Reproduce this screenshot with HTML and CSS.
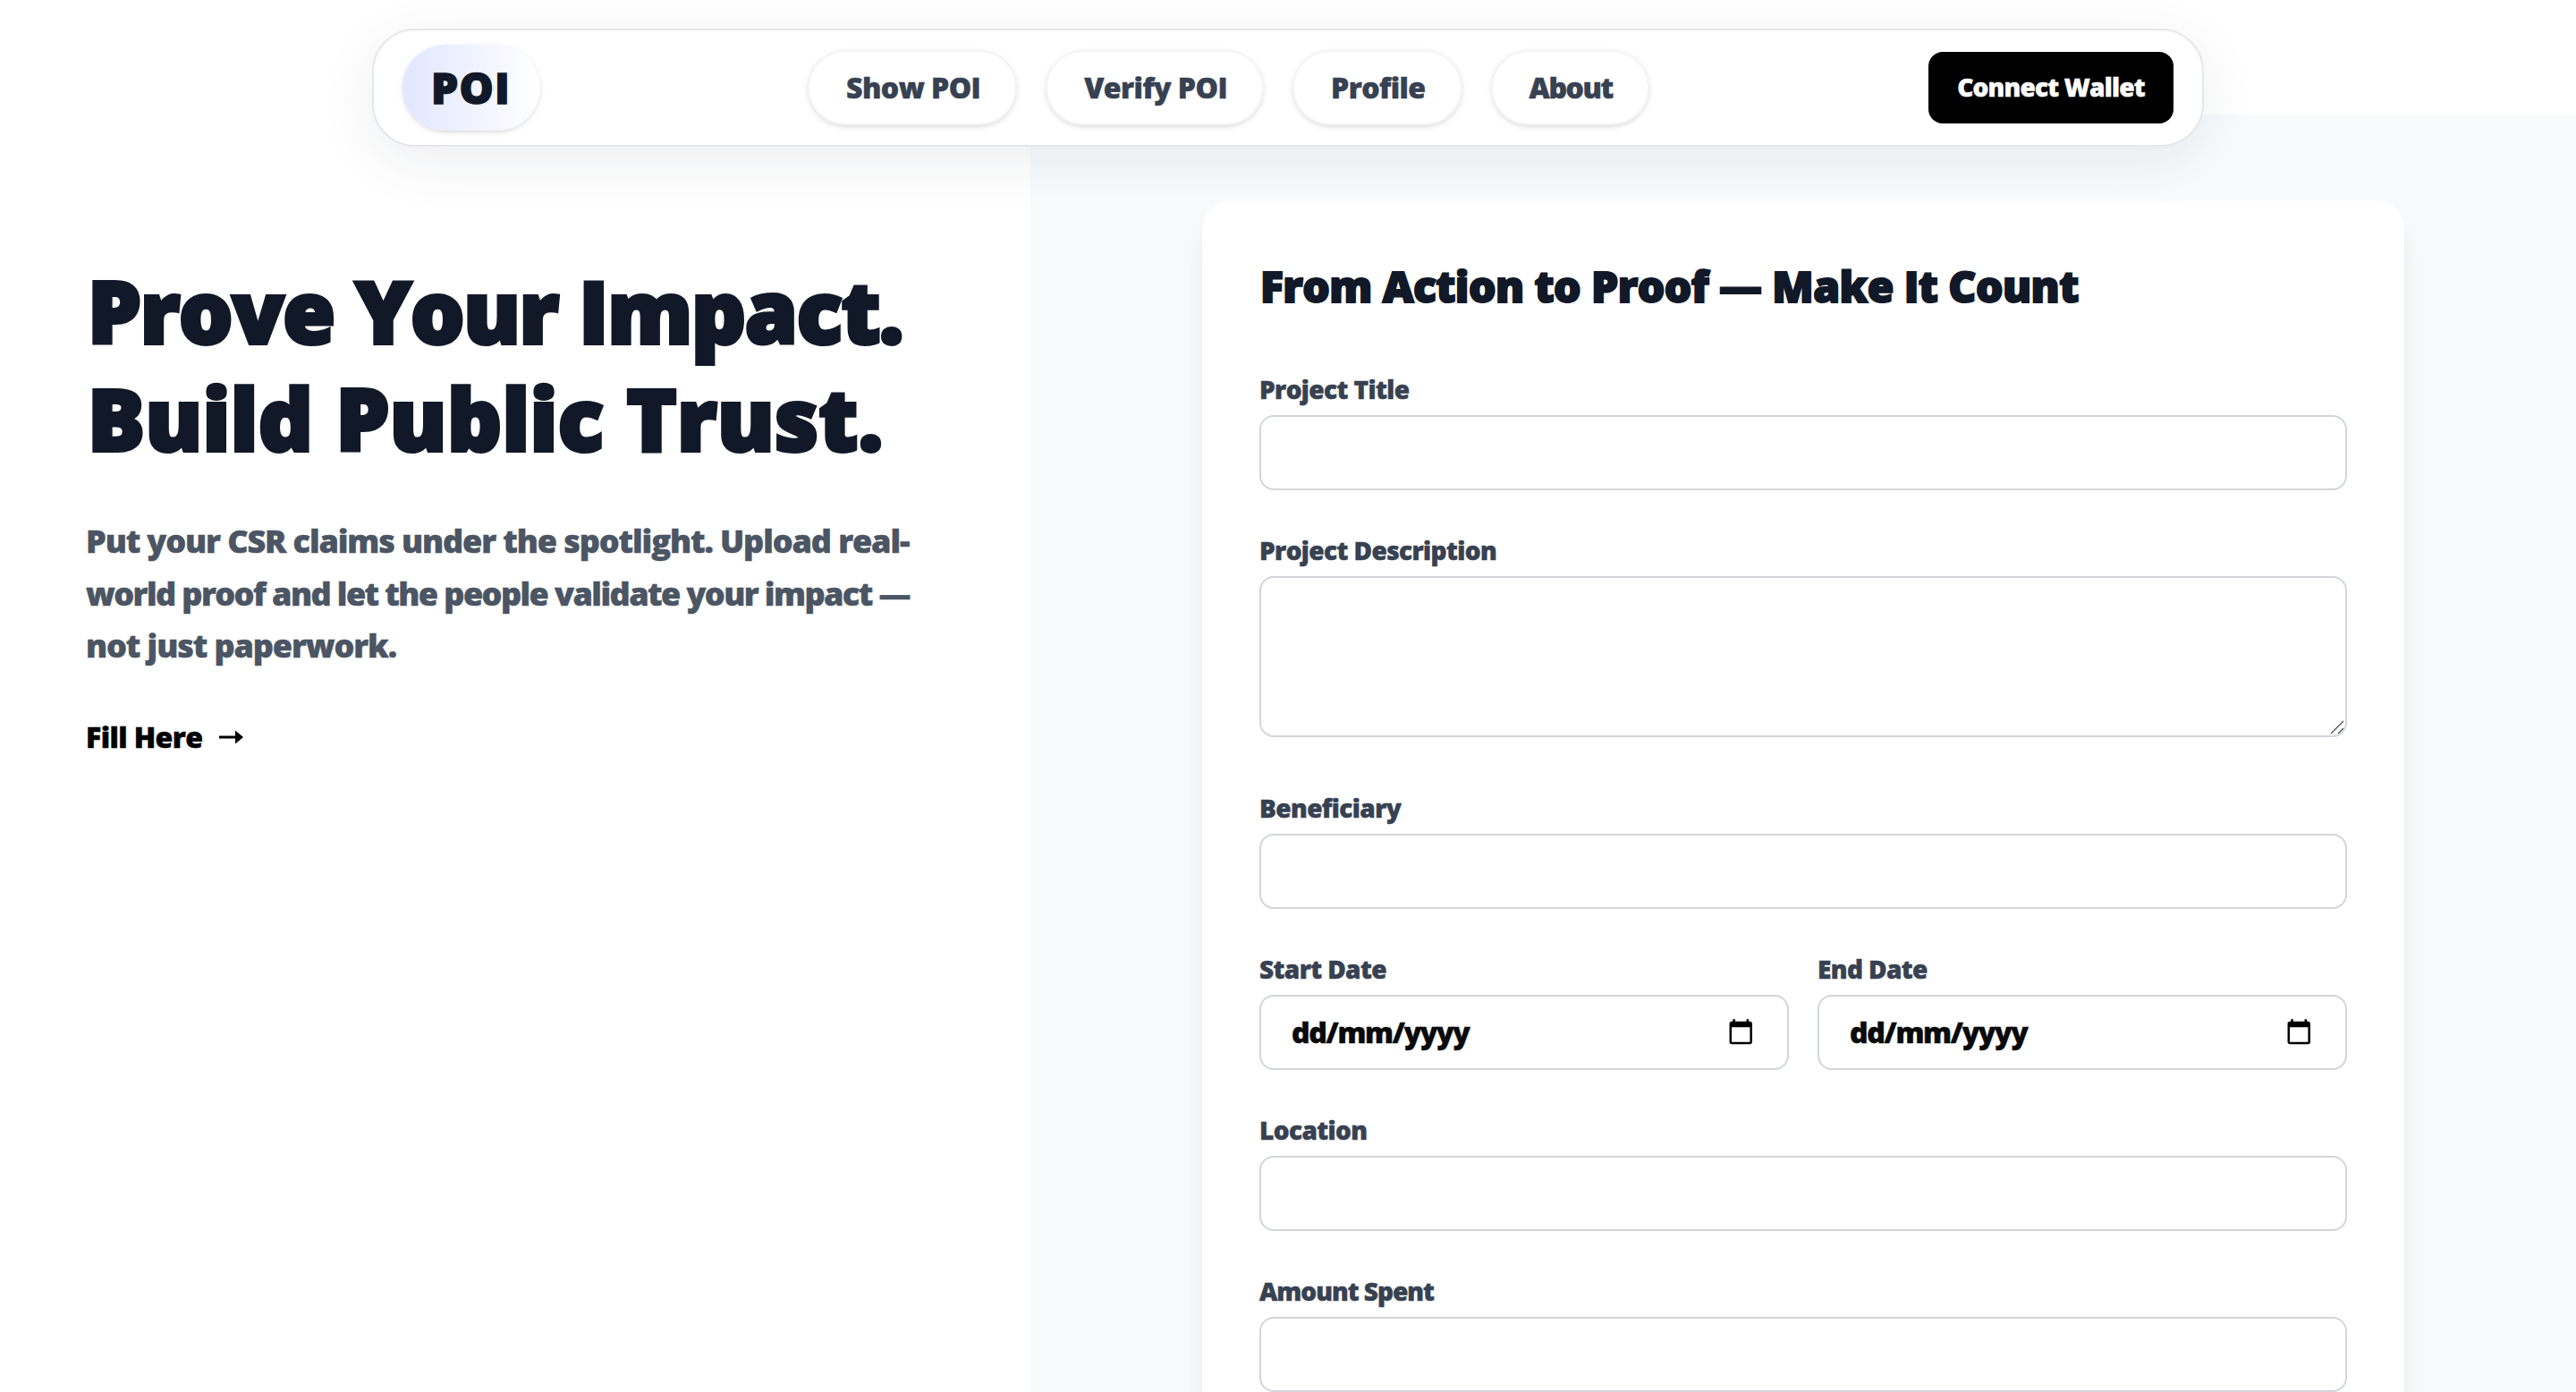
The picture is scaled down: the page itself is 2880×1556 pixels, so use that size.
FILE: index.html
```
<!DOCTYPE html>
<html lang="en">
<head>
    <meta charset="UTF-8">
    <meta name="viewport" content="width=device-width, initial-scale=1.0">
    <title>POI</title>
    <link rel="stylesheet" href="styles.css">
</head>
<body>
    <header class="navbar">
        <a class="logo">POI</a>
        <nav class="nav-links">
            <a class="nav-link">Show POI</a>
            <a class="nav-link">Verify POI</a>
            <a class="nav-link">Profile</a>
            <a class="nav-link nav-link-tight">About</a>
        </nav>
        <button class="connect-btn">Connect Wallet</button>
    </header>

    <main class="page">
        <section class="intro">
            <h1 class="intro-title">
                <span class="title-top">Prove Your Impact.</span><br>
                <span>Build Public Trust.</span>
            </h1>
            <p class="intro-text">
                Put your CSR claims under the spotlight. Upload real-<br>
                <span class="text-tight">world proof and let the people validate your impact —</span><br>
                not just paperwork.
            </p>
            <a class="fill-link">
                Fill Here
                <svg class="arrow" viewBox="0 0 27 16">
                    <path d="M0 6.6H18V0.5L27 8L18 15.5V9.4H0Z"/>
                </svg>
            </a>
        </section>

        <section class="form-panel">
            <form class="card">
                <h2 class="card-title">From Action to Proof — Make It Count</h2>
                <div class="field">
                    <label for="title">Project Title</label>
                    <input class="control" id="title" type="text">
                </div>
                <div class="field">
                    <label for="description">Project Description</label>
                    <div class="textarea-wrap">
                        <textarea class="control control-area" id="description"></textarea>
                        <!-- resize handle -->
                        <svg class="resizer" viewBox="0 0 16 16">
                            <path d="M1 15L15 1M9 15L15 9"/>
                        </svg>
                    </div>
                </div>
                <div class="field">
                    <label for="beneficiary">Beneficiary</label>
                    <input class="control" id="beneficiary" type="text">
                </div>
                <div class="field-row">
                    <div class="field">
                        <label>Start Date</label>
                        <div class="control control-date">
                            <span>dd/mm/yyyy</span>
                            <svg class="calendar" viewBox="0 0 24 24">
                                <path d="M20 3h-1V1h-2v2H7V1H5v2H4c-1.1 0-2 .9-2 2v16c0 1.1.9 2 2 2h16c1.1 0 2-.9 2-2V5c0-1.1-.9-2-2-2zm0 18H4V8h16v13z"/>
                            </svg>
                        </div>
                    </div>
                    <div class="field">
                        <label>End Date</label>
                        <div class="control control-date">
                            <span>dd/mm/yyyy</span>
                            <svg class="calendar" viewBox="0 0 24 24">
                                <path d="M20 3h-1V1h-2v2H7V1H5v2H4c-1.1 0-2 .9-2 2v16c0 1.1.9 2 2 2h16c1.1 0 2-.9 2-2V5c0-1.1-.9-2-2-2zm0 18H4V8h16v13z"/>
                            </svg>
                        </div>
                    </div>
                </div>
                <div class="field">
                    <label for="location">Location</label>
                    <input class="control" id="location" type="text">
                </div>
                <div class="field">
                    <label class="label-tight" for="amount">Amount Spent</label>
                    <input class="control" id="amount" type="text">
                </div>
            </form>
        </section>
    </main>
</body>
</html>
```
FILE: styles.css
```
* {
    box-sizing: border-box;
}
body {
    margin: 0;
    height: 1556px;
    overflow: hidden;
    background-color: #fff;
    font-family: "Open Sans", "Noto Sans", sans-serif;
    font-weight: 800;
    color: #0a0a0a;
    -webkit-text-stroke: 0.5px currentColor;
}

/* Navbar */
.navbar {
    position: relative;
    z-index: 10;
    display: flex;
    align-items: center;
    width: 2048px;
    height: 132px;
    margin: 32px auto 0;
    padding: 0 32px;
    background-color: #fff;
    border: 2px solid #e5e7eb;
    border-radius: 48px;
    box-shadow: 0 16px 64px rgba(31, 38, 70, 0.08);
}
.logo {
    width: 154px;
    padding: 16px 0 16px 32px;
    border-radius: 48px;
    background: linear-gradient(to right, #e0e7ff, #fff);
    box-shadow: 0 2px 6px rgba(0, 0, 0, 0.1), 0 2px 4px -2px rgba(0, 0, 0, 0.1);
    font-size: 48px;
    line-height: 64px;
    letter-spacing: 1.2px;
    color: #111827;
    -webkit-text-stroke: 1.5px #111827;
}
.nav-links {
    display: flex;
    gap: 32px;
    margin-left: 299px;
}
.nav-link {
    padding: 16px 39px 16px 41px;
    border: 2px solid #f3f4f6;
    border-radius: 42px;
    box-shadow: 0 2px 6px rgba(0, 0, 0, 0.1), 0 2px 4px -2px rgba(0, 0, 0, 0.1);
    font-size: 32px;
    line-height: 48px;
    letter-spacing: -0.55px;
    color: #374151;
}
.nav-link-tight {
    letter-spacing: -1.4px;
}
.connect-btn {
    width: 274px;
    height: 80px;
    margin-left: auto;
    padding: 0 0 2px;
    border: none;
    border-radius: 16px;
    background-color: #000;
    font-family: inherit;
    font-size: 28px;
    font-weight: 800;
    letter-spacing: -0.8px;
    color: #fff;
}

/* Two column layout, slides under the navbar */
.page {
    display: flex;
    height: 1428px;
    margin-top: -36px;
}
.intro {
    width: 40%;
    padding: 159px 96px 0;
}
.form-panel {
    width: 60%;
    padding-top: 96px;
    background-color: #f8fafc;
}

/* Intro */
.intro-title {
    margin: 0 0 49px;
    padding-left: 2px;
    font-size: 95px;
    font-weight: 800;
    line-height: 120px;
    letter-spacing: 0.4px;
    white-space: nowrap;
    color: #111827;
    -webkit-text-stroke: 4px #111827;
}
.title-top {
    letter-spacing: -1.25px;
}
.intro-text {
    margin: 0 0 48.5px;
    font-size: 36px;
    line-height: 58.5px;
    letter-spacing: -1.1px;
    white-space: nowrap;
    color: #4b5563;
}
.text-tight {
    letter-spacing: -1.57px;
}
.fill-link {
    display: flex;
    align-items: center;
    gap: 19px;
    font-size: 32px;
    line-height: 48px;
    letter-spacing: -0.6px;
    color: #000;
}
.arrow {
    width: 27px;
    height: 16px;
}

/* Form card */
.card {
    width: 1344px;
    height: 1500px;
    margin: 0 auto;
    padding: 64px;
    border-radius: 32px;
    background-color: #fff;
    box-shadow: 0 20px 30px -6px rgba(0, 0, 0, 0.1), 0 8px 12px -8px rgba(0, 0, 0, 0.1);
}
.card-title {
    margin: 0 0 64px;
    padding-left: 1px;
    font-size: 48px;
    font-weight: 800;
    line-height: 64px;
    letter-spacing: -0.55px;
    color: #111827;
    -webkit-text-stroke: 2px #111827;
}
.field {
    flex: 1;
    margin-bottom: 48px;
}
.field-row {
    display: flex;
    gap: 32px;
}
.field label {
    display: block;
    margin-bottom: 9px;
    font-size: 28px;
    line-height: 39px;
    letter-spacing: -0.6px;
    color: #374151;
}
.field .label-tight {
    letter-spacing: -1px;
}
.control {
    display: block;
    width: 100%;
    height: 84px;
    padding: 16px 32px;
    border: 2px solid #d1d5db;
    border-radius: 16px;
    background-color: #fff;
    font-family: inherit;
    font-size: 32px;
    line-height: 48px;
}
.textarea-wrap {
    position: relative;
    padding-bottom: 12px;
}
.control-area {
    height: 180px;
    resize: none;
}
.resizer {
    position: absolute;
    right: 3px;
    bottom: 15px;
    width: 16px;
    height: 16px;
    fill: none;
    stroke: #555;
    stroke-width: 1.4;
}
.control-date {
    display: flex;
    align-items: center;
    justify-content: space-between;
    padding-left: 34px;
    letter-spacing: -1.3px;
}
.calendar {
    width: 30.5px;
    height: 30.5px;
    margin: 0 5px 2px 0;
}
```
